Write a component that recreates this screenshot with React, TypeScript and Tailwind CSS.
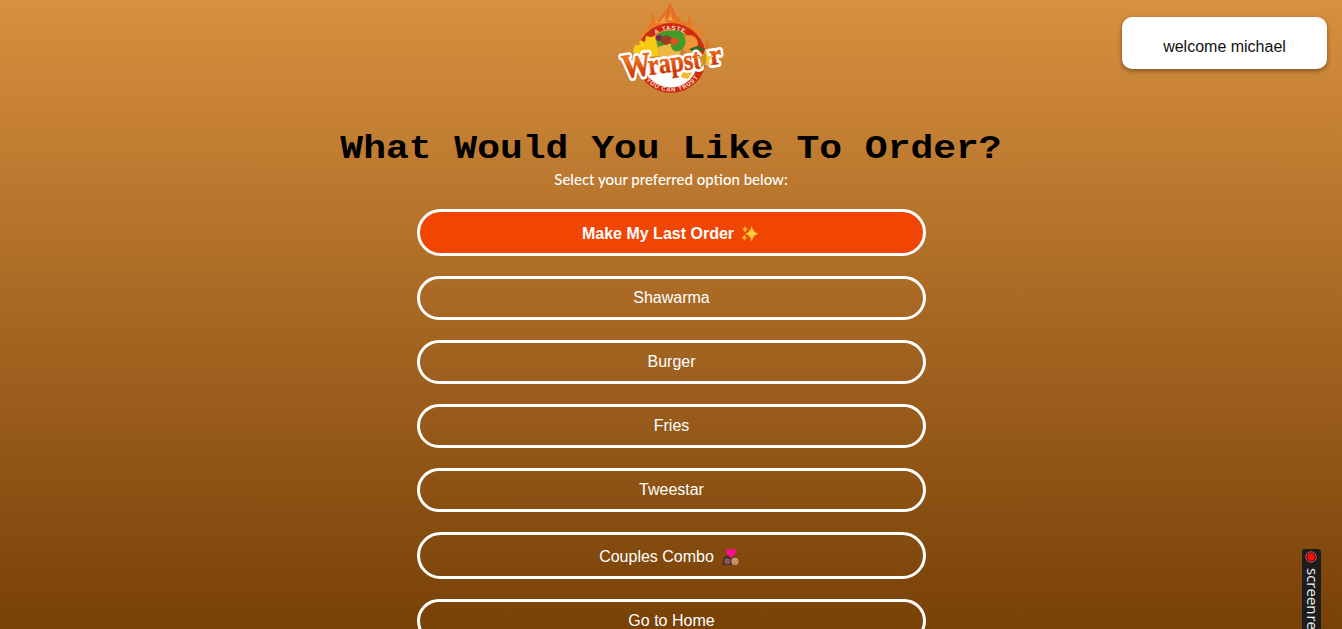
import React from "react";

function Logo() {
  return (
    <svg width="124" height="100" viewBox="0 0 124 100" className="block" role="img" aria-label="Wrapstar">
      <defs>
        <linearGradient id="flame" x1="0" y1="0" x2="0" y2="1">
          <stop offset="0" stopColor="#e0651f" />
          <stop offset="1" stopColor="#f08a2c" />
        </linearGradient>
        <linearGradient id="word" x1="0" y1="0" x2="0" y2="1">
          <stop offset="0.35" stopColor="#ee7415" />
          <stop offset="0.8" stopColor="#c9300c" />
        </linearGradient>
        <path id="topArc" d="M33 54 A29.5 29.5 0 0 1 91 54" />
        <path id="bottomArc" d="M28.5 58 A33.5 33.5 0 0 0 95.5 58" />
      </defs>
      <path
        d="M34 42 C31 36 34 30 36 28 C36 32 37 34 39 34 C37 27 41 23 44 20 C42 17 43 12 44 11 C43 18 47 21 50 20 C52 13 60 11 60 3 C66 9 65 15 69 17 C72 21 75 22 78 23 C80 21 80 18 78 14 C85 20 81 27 87 31 C91 29 90 26 88 24 C94 30 92 37 91 42Z"
        fill="url(#flame)"
      />
      <path d="M58 20 C64 14 61 10 61 6 C64 12 60 17 65 21Z" fill="#f6a04c" />
      <path d="M46 23 C46 19 49 19 50 25 C52 20 55 17 57 15 C55 20 56 22 58 23Z" fill="#f49e48" />
      <path d="M96 49 C98 45 97 42 96 38 C100 42 99 45 101 47Z" fill="#e66b25" />
      <circle cx="62" cy="58" r="35" fill="#ce2a0d" />
      <circle cx="62" cy="57" r="27.5" fill="#cb8736" />
      <path d="M34 60 H89 A27.5 27.5 0 0 1 34 60Z" fill="#fff" />
      <path d="M24 50 L26 45 30 45 31 40 36 42 37 36 42 37 46 36 50 56 26 58Z" fill="#f7cb12" />
      <ellipse cx="81" cy="44" rx="8" ry="9" fill="#ef9535" />
      <path d="M80 53 L92 50 89 56 78 59Z" fill="#f6b72a" />
      <path d="M47 39 L73 41 70 60 51 59Z" fill="#edb744" />
      <path d="M47 38 C49 31 54 33 57 31 L64 31 C69 29 75 32 75 37 C79 42 75 48 72 50 C66 54 61 49 62 43 L49 47Z" fill="#3f9c26" />
      <ellipse cx="50" cy="38" rx="3.3" ry="3" fill="#772b55" />
      <path d="M52 38 L57 35 62 37 63 43 57 45 52 43Z" fill="#983d20" />
      <path d="M61 40 L67 37 70 42 64 46Z" fill="#e65120" />
      <path d="M80 49 L88 46 97 49 86 53Z" fill="#356d1d" />
      <path d="M73 73 L80 69 85 70 79 79 72 77Z" fill="#f6ba25" />
      <text fontFamily="Liberation Sans, sans-serif" fontWeight="700" fontSize="6" fill="#ffe6dc" letterSpacing="0.8">
        <textPath href="#topArc" startOffset="49%" textAnchor="middle">A TASTE</textPath>
      </text>
      <text fontFamily="Liberation Sans, sans-serif" fontWeight="700" fontSize="5.8" fill="#ffe6dc" letterSpacing="1">
        <textPath href="#bottomArc" startOffset="52%" textAnchor="middle">YOU CAN TRUST</textPath>
      </text>
      <g transform="translate(2.5 0) rotate(-7.5 15 79)" fontFamily="Liberation Serif, serif" fontWeight="700">
        <g stroke="#fff" strokeWidth="6" strokeLinejoin="round" fill="#fff">
          <text x="12" y="78" fontSize="34" textLength="29" lengthAdjust="spacingAndGlyphs">W</text>
          <text x="38" y="78" fontSize="29" textLength="53" lengthAdjust="spacingAndGlyphs">rapst</text>
          <text x="100" y="76" fontSize="29" textLength="12" lengthAdjust="spacingAndGlyphs">r</text>
        </g>
        <g fill="url(#word)" stroke="#df5413" strokeWidth="0.6">
          <text x="12" y="78" fontSize="34" textLength="29" lengthAdjust="spacingAndGlyphs">W</text>
          <text x="38" y="78" fontSize="29" textLength="53" lengthAdjust="spacingAndGlyphs">rapst</text>
          <text x="100" y="76" fontSize="29" textLength="12" lengthAdjust="spacingAndGlyphs">r</text>
        </g>
      </g>
      <path d="M97 49 L99 56 104 56 100 60 102 66 97 64 91 68 93 61 88 57 94 56Z" fill="#f0c529" stroke="#fff" strokeWidth="0.6" />
      <path d="M97 50 L97 64 92 67 93 61 89 57 94 56Z" fill="#cb9620" />
    </svg>
  );
}

function Sparkles() {
  return (
    <svg width="18" height="18" viewBox="0 0 18 18" className="ml-[7px] block" aria-hidden="true">
      <path d="M10.7 1.5 Q11.9 7.3 17 8.7 Q11.9 10.2 10.7 16 Q9.4 10.2 4.5 8.7 Q9.4 7.3 10.7 1.5ZM4 1.5 Q4.4 3.8 6.5 4.2 Q4.4 4.7 4 7 Q3.6 4.7 1.7 4.2 Q3.6 3.8 4 1.5ZM3.3 10 Q3.7 12.2 5.7 12.7 Q3.7 13.1 3.3 15.3 Q2.9 13.1 1 12.7 Q2.9 12.2 3.3 10Z" fill="#ffc83d" stroke="#ffc83d" strokeWidth="0.4" />
    </svg>
  );
}

function Couple() {
  return (
    <svg width="18" height="18" viewBox="0 0 18 18" className="ml-2 block" aria-hidden="true">
      <path d="M1 17 C0 9 3 8 5.5 8 C9 8 10 10 9.5 17Z" fill="#402a32" />
      <circle cx="5.3" cy="13.3" r="3.1" fill="#8b5b53" />
      <circle cx="13" cy="12.7" r="4" fill="#704127" />
      <circle cx="13" cy="13.3" r="3.6" fill="#d29673" />
      <path d="M3.8 12.8h.8M6 12.8h.8M11.4 12.8h.8M14 12.8h.8M4.7 15h1.4M12.2 15h1.6" stroke="#744638" strokeWidth="0.7" />
      <path d="M9 9.7 C2 5 4 .7 6.8 .7 Q8.6.8 9 2 Q9.6.7 11.2 .7 C14 .7 16 5 9 9.7Z" fill="#ff0b92" />
    </svg>
  );
}

const plain = "flex h-11 w-full shrink-0 items-center justify-center rounded-full border-[3px] border-white pb-px pl-px text-base text-white";
const tall = "flex h-[47px] w-full shrink-0 items-center justify-center rounded-full border-[3px] border-white pt-[3px] text-base text-white";

export default function App() {
  return (
    <div className="relative h-[629px] w-full overflow-hidden bg-linear-to-b from-[#d8903e] to-[#784106] font-['Liberation_Sans',Arial,sans-serif]">
      <main className="flex flex-col items-center">
        <Logo />
        <h1 className="mt-[25px] mb-[2px] origin-bottom scale-y-[0.88] whitespace-nowrap font-['Courier_New','Liberation_Mono',monospace] text-[38px] leading-[43px] font-bold text-black">
          What Would You Like To Order?
        </h1>
        <p className="font-['Lato',sans-serif] text-[15px] leading-[19px] font-medium whitespace-nowrap text-white">
          Select your preferred option below:
        </p>
        <nav className="mt-[20px] flex w-[509px] flex-col gap-5">
          <button className={`${tall} bg-[#f14503] pr-px font-bold`}>
            Make My Last Order <Sparkles />
          </button>
          <button className={plain}>Shawarma</button>
          <button className={plain}>Burger</button>
          <button className={plain}>Fries</button>
          <button className={plain}>Tweestar</button>
          <button className={`${tall} pr-[3px]`}>
            Couples Combo <Couple />
          </button>
          <button className={plain}>Go to Home</button>
        </nav>
      </main>
      <div className="absolute top-[17px] right-[15px] flex h-[52px] w-[205px] items-center justify-center rounded-[10px] bg-white pt-[7px] text-base text-[#111] shadow-[0_2px_5px_rgba(0,0,0,0.4)]">
        welcome michael
      </div>
      <div className="absolute top-[549px] left-[1302px] flex h-[120px] w-[19px] flex-col items-center overflow-hidden rounded-t-[3px] bg-[#1d1d1d] pt-[2px]">
        <svg width="12" height="12" viewBox="0 0 12 12" className="mr-px shrink-0">
          <circle cx="6" cy="6" r="5.2" fill="none" stroke="#e55050" />
          <circle cx="6" cy="6" r="3.7" fill="#ff0b0b" />
        </svg>
        <span className="mt-[5px] ml-[3px] font-['Open_Sans',sans-serif] text-[15px] leading-[18px] font-medium whitespace-nowrap text-[#eee] [word-spacing:-3px] [writing-mode:vertical-rl]">
          screen recorder
        </span>
      </div>
    </div>
  );
}
